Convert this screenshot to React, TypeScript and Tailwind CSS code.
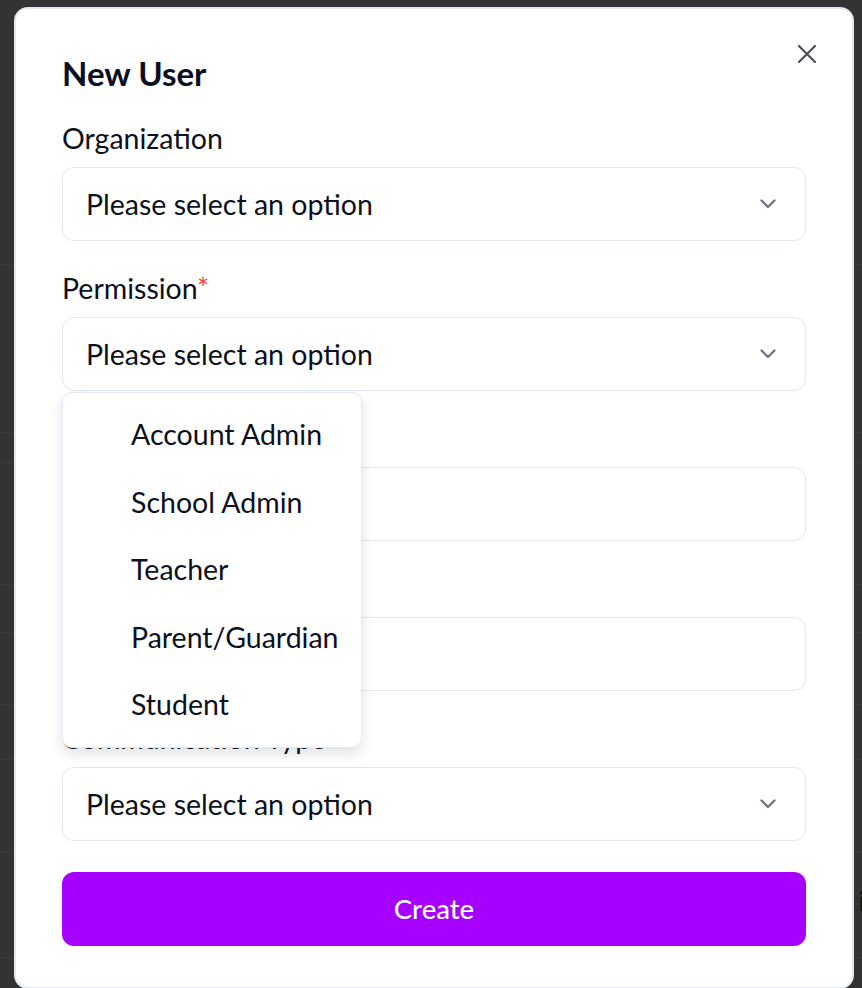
import React from "react";

const Chevron = () => (
  <svg width="16" height="10" viewBox="0 0 16 10" fill="none" className="shrink-0">
    <path d="M1.5 1.5 8 8l6.5-6.5" stroke="#6b6f7b" strokeWidth="2.2" strokeLinecap="round" strokeLinejoin="round" />
  </svg>
);

const SelectBox = ({ text, chevron = true }: { text?: string; chevron?: boolean }) => (
  <div className="h-[74px] w-full rounded-[12px] border-[1.5px] border-[#e1e6f0] bg-white flex items-center justify-between pl-[23px] pr-[29px]">
    <span className="text-[28.5px] text-[#0d1020]">{text ?? ""}</span>
    {chevron && <Chevron />}
  </div>
);

const Label = ({ children }: { children: React.ReactNode }) => (
  <div className="h-[36px] leading-[36px] text-[28.5px] text-[#0d1020]">{children}</div>
);

export default function App() {
  const bgLines = [265, 433, 463, 585, 633, 705, 760, 852, 958];
  const items = ["Account Admin", "School Admin", "Teacher", "Parent/Guardian", "Student"];
  return (
    <div
      className="relative w-[862px] h-[988px] overflow-hidden bg-[#333333]"
      style={{ fontFamily: "Lato, 'Noto Sans', sans-serif" }}
    >
      {/* background page rows */}
      <div className="flex flex-col">
        {bgLines.map((y, i) => {
          const prev = i === 0 ? 0 : bgLines[i - 1];
          return (
            <div
              key={y}
              className="border-b border-[#3b3b3b] flex items-end justify-end"
              style={{ height: y - prev }}
            >
              {y === 958 ? <span className="text-[27px] text-[#111] mr-[-3px] mb-[36px]">i</span> : null}
            </div>
          );
        })}
      </div>

      {/* modal */}
      <div className="absolute left-[14px] top-[7px] w-[840px] h-[982px] rounded-[14px] border-2 border-[#e3e8f1] bg-white px-[46px] pt-[44px]">
        <button className="absolute right-[36px] top-[36px] w-[18px] h-[18px] flex items-center justify-center">
          <svg width="18" height="18" viewBox="0 0 18 18" fill="none">
            <path d="M1 1l16 16M17 1 1 17" stroke="#4b4f5c" strokeWidth="2.2" strokeLinecap="round" />
          </svg>
        </button>

        <h1 className="h-[40px] leading-[40px] text-[33px] font-bold text-[#0a0e1f]">New User</h1>

        <div className="mt-[27px] flex flex-col gap-[29px]">
          <div className="flex flex-col">
            <Label>Organization</Label>
            <div className="mt-[11px]">
              <SelectBox text="Please select an option" />
            </div>
          </div>

          <div className="relative flex flex-col z-10">
            <Label>
              Permission<span className="text-[#ef4444]">*</span>
            </Label>
            <div className="mt-[11px]">
              <SelectBox text="Please select an option" />
            </div>
            <div className="absolute left-0 top-full mt-[1px] w-[300px] rounded-[10px] border-[1.5px] border-[#e3e8f1] bg-white py-[8px] shadow-[0_6px_14px_rgba(15,23,42,0.12)]">
              {items.map((it) => (
                <div key={it} className="h-[67.5px] flex items-center pl-[68px] text-[28.5px] text-[#0d1020]">
                  {it}
                </div>
              ))}
            </div>
          </div>

          <div className="flex flex-col">
            <Label>Email</Label>
            <div className="mt-[11px]">
              <SelectBox chevron={false} />
            </div>
          </div>

          <div className="flex flex-col">
            <Label>Name</Label>
            <div className="mt-[11px]">
              <SelectBox chevron={false} />
            </div>
          </div>

          <div className="flex flex-col">
            <Label>Communication Type</Label>
            <div className="mt-[11px]">
              <SelectBox text="Please select an option" />
            </div>
          </div>
        </div>

        <button className="mt-[31px] h-[74px] w-full rounded-[12px] bg-[#a600ff] text-white text-[27.5px] font-medium flex items-center justify-center">
          Create
        </button>
      </div>
    </div>
  );
}
